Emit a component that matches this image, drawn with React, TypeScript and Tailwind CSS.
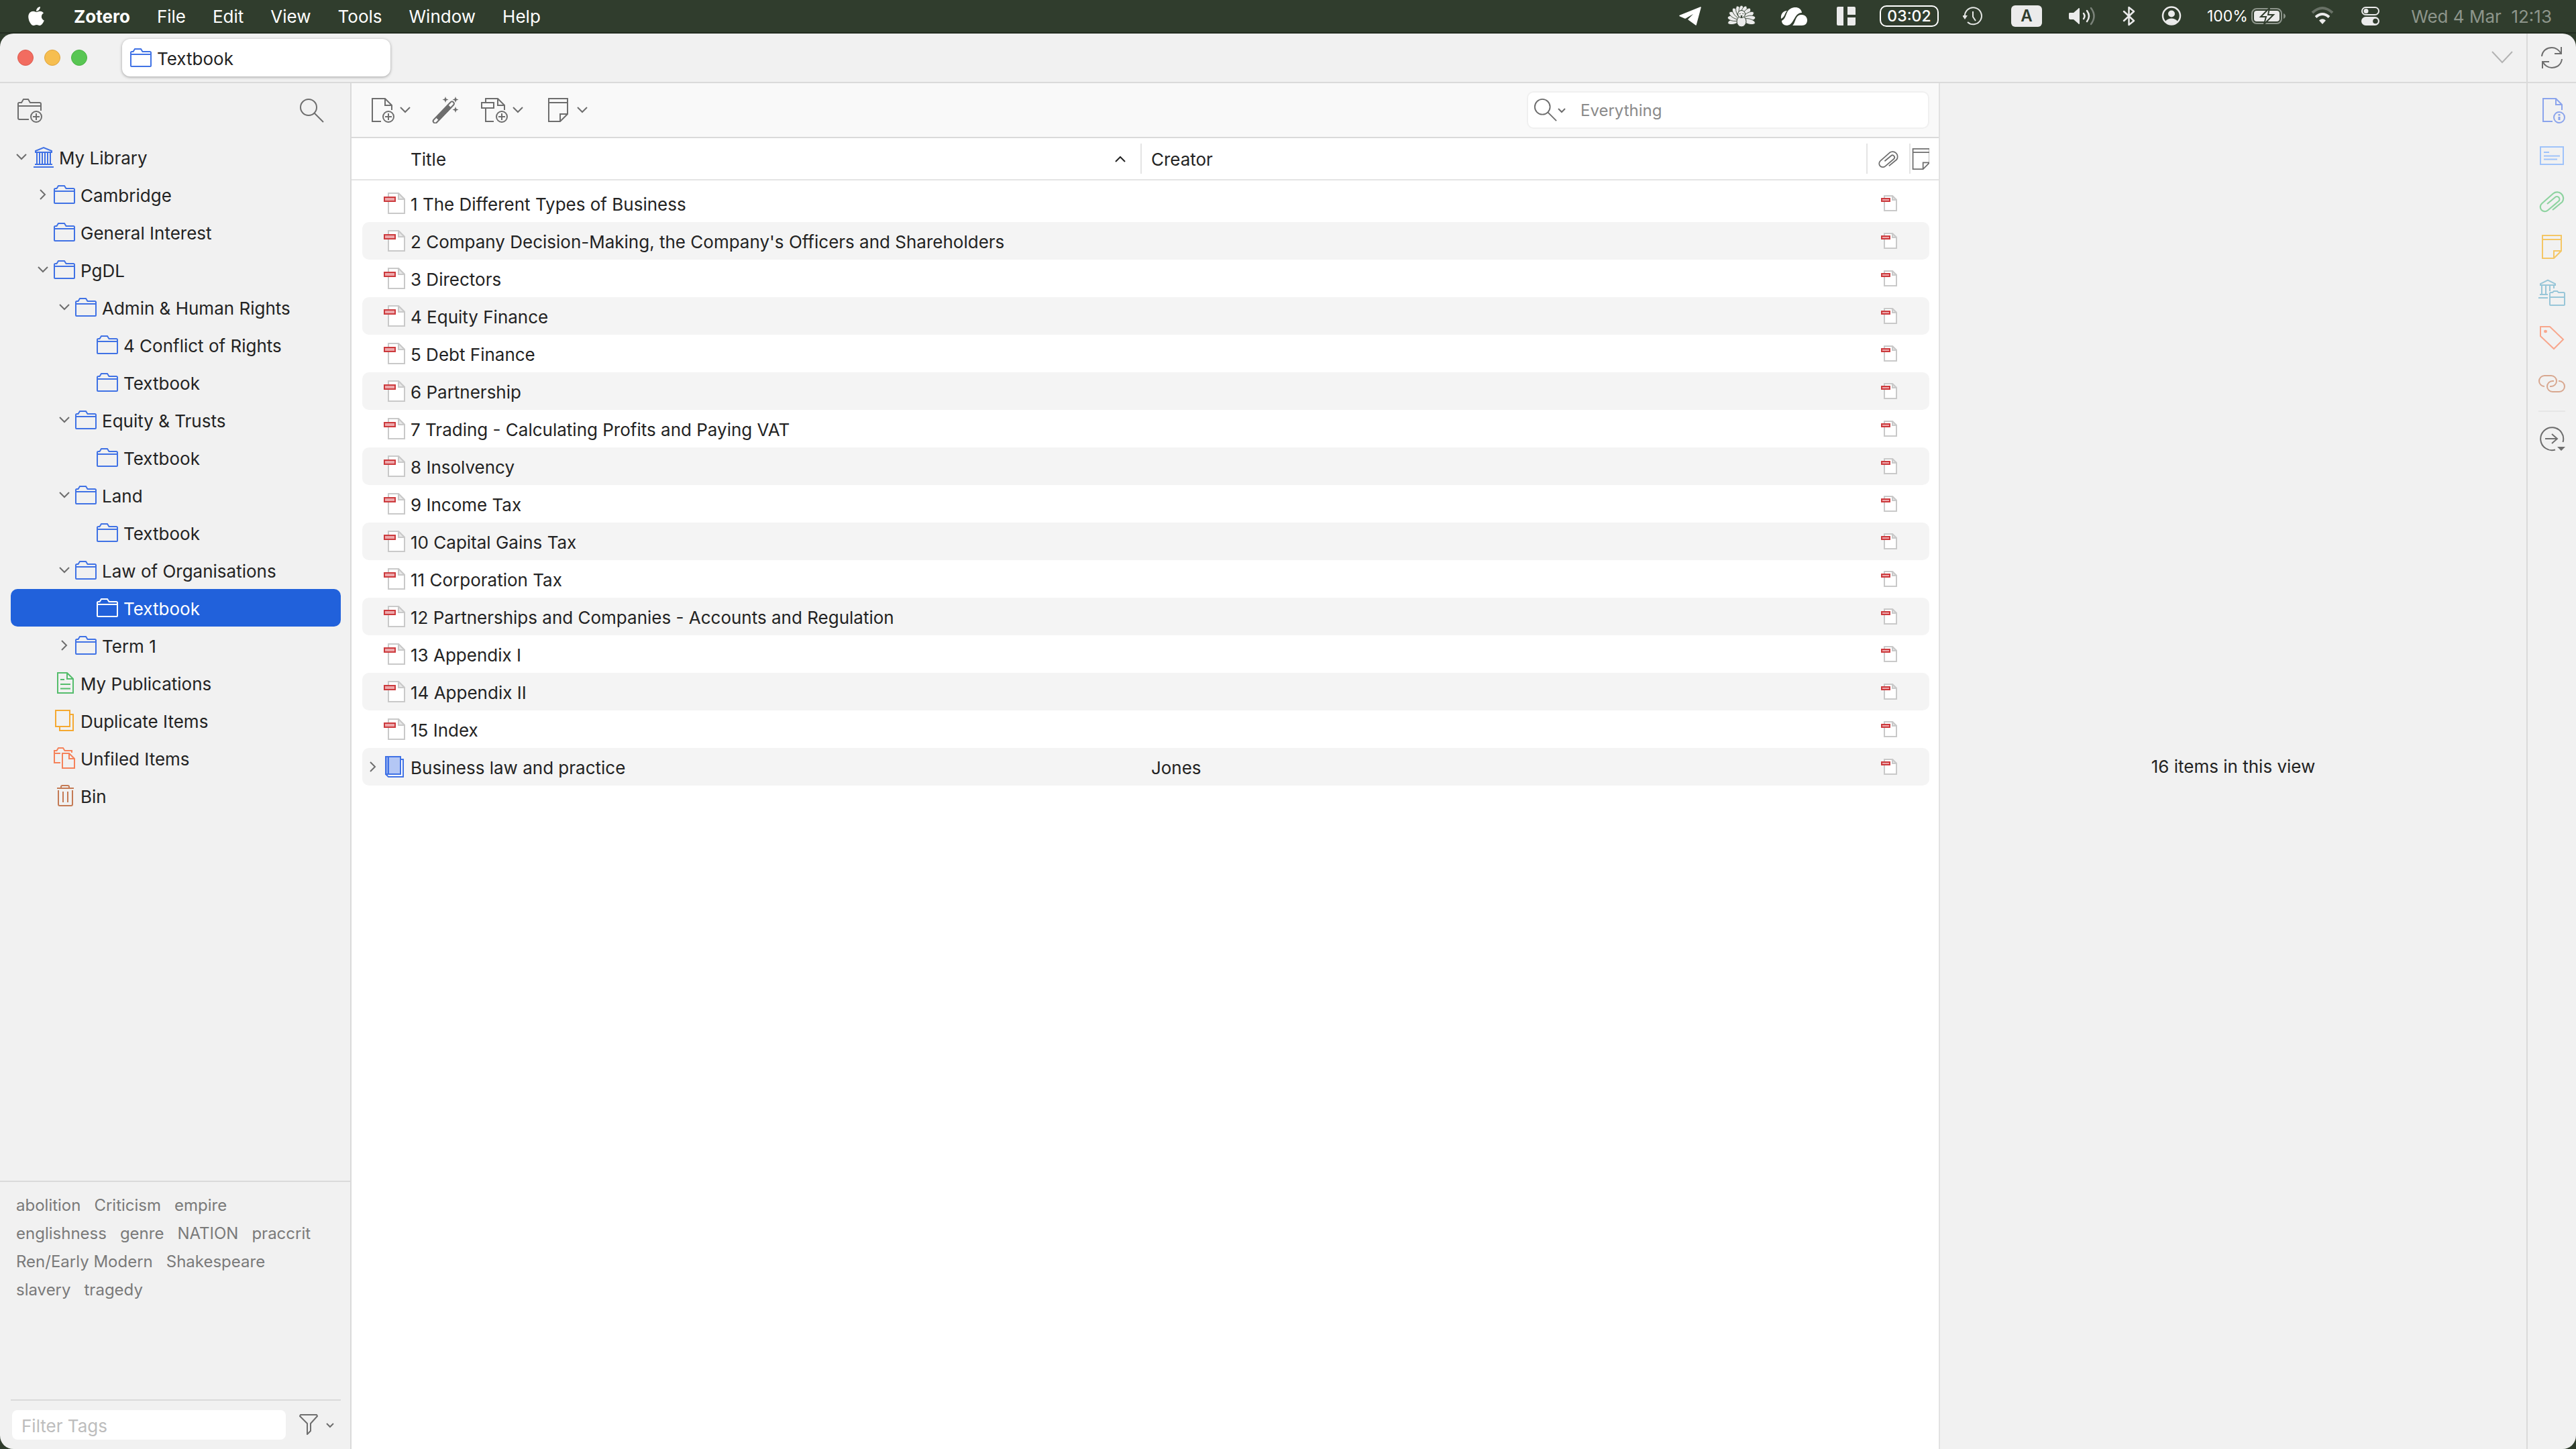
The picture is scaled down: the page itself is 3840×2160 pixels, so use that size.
import type { ReactNode } from 'react'
import { FaApple } from 'react-icons/fa'
import { clsx } from 'clsx'

type IconProps = { className?: string }

function Svg({ w, h, className, children }: { w: number; h: number; className?: string; children: ReactNode }) {
  return (
    <svg
      width={w}
      height={h}
      viewBox={`0 0 ${w} ${h}`}
      fill="none"
      stroke="currentColor"
      strokeWidth={2}
      className={clsx('shrink-0', className)}
      aria-hidden="true"
    >
      {children}
    </svg>
  )
}

/* ---------- generic icons ---------- */

const ChevronDown = ({ className }: IconProps) => (
  <Svg w={16} h={16} className={className}><path d="M1 4l7 7 7-7" /></Svg>
)

const ChevronRight = ({ className }: IconProps) => (
  <Svg w={16} h={16} className={className}><path d="M4 1l7 7-7 7" /></Svg>
)

const SmallChevron = ({ className }: IconProps) => (
  <Svg w={12} h={12} className={className}><path d="M1 4l5 5 5-5" /></Svg>
)

const SearchIcon = ({ className }: IconProps) => (
  <Svg w={38} h={38} className={className}>
    <circle cx="14" cy="14" r="12" />
    <path d="M22.500 22.500L36 36" />
  </Svg>
)

const FolderIcon = ({ className }: IconProps) => (
  <Svg w={32} h={32} className={className}>
    <path d="M1 28V8.500A1.500 1.500 0 0 1 2.500 7H4.500L7 3H16L18.500 7H29.500A1.500 1.500 0 0 1 31 8.500V28a1 1 0 0 1-1 1H2a1 1 0 0 1-1-1zM1 11H31" />
  </Svg>
)

const LibraryIcon = () => (
  <Svg w={32} h={32} className="text-[#4072e5]">
    <path d="M5 9V7l12-5 12 5v2zM7 9v18M11 9v18M15 9v18M19 9v18M23 9v18M27 9v18M4 27h26M2 31h30" />
  </Svg>
)

const PublicationsIcon = () => (
  <Svg w={32} h={32} className="text-[#55bd6c]">
    <path d="M6 1H20L29 10V31H6zM20 1V10H29M10 11H16M10 18H25M10 24.500H25" />
  </Svg>
)

const DuplicateIcon = () => (
  <Svg w={32} h={32} className="text-[#f5a931]">
    <path d="M3 1H24V25H3zM24 7H29V31H9V25" />
  </Svg>
)

const UnfiledIcon = () => (
  <Svg w={32} h={32} className="text-[#f5825a]">
    <path d="M10 23H1V5H4.500L7 1H14L16.500 5H27V8M1 9H10M13 9H23L31 17V31H13zM23 9V17H31" />
  </Svg>
)

const BinIcon = () => (
  <Svg w={32} h={32} className="text-[#c47a54]">
    <path d="M5 5H30M11 5V3a2 2 0 0 1 2-2H21a2 2 0 0 1 2 2V5M7 8V29a2 2 0 0 0 2 2H26a2 2 0 0 0 2-2V8M14 10V26M21 10V26" />
  </Svg>
)

const PlusBadge = ({ x, y }: { x: number; y: number }) => (
  <g>
    <circle cx={x} cy={y} r="8" />
    <path d={`M${x - 5} ${y}h10M${x} ${y - 5}v10`} />
  </g>
)

const NewCollectionIcon = () => (
  <Svg w={40} h={40}>
    <path d="M19 33H5a2 2 0 0 1-2-2V9.500A1.500 1.500 0 0 1 4.500 8H8L11 3H18L21 8H35a2 2 0 0 1 2 2V20M3 13H37" />
    <PlusBadge x={30} y={29} />
  </Svg>
)

const NewItemIcon = () => (
  <Svg w={40} h={40}>
    <path d="M16 37H3V3H22L32 13V20M22 3V13H32" />
    <PlusBadge x={27} y={30} />
  </Svg>
)

const WandIcon = () => (
  <Svg w={40} h={40}>
    <path d="M2.500 34.500L27.500 8.500a3 3 0 0 1 4.500 4L7 38.500a3 3 0 0 1-4.500-4z" />
    <path d="M7 31L24 13.500L27.500 17L10.500 34.500z" fill="currentColor" />
    <path d="M20 0l1.200 3.300L24.500 4.500l-3.300 1.200L20 9l-1.200-3.300L15.500 4.500l3.300-1.200zM35 0l1.200 3.300L39.500 4.500l-3.300 1.200L35 9l-1.200-3.300L30.500 4.500l3.300-1.200zM35 15l1.200 3.300 3.300 1.200-3.300 1.200L35 24l-1.200-3.300-3.300-1.200 3.300-1.200z" fill="currentColor" stroke="none" />
  </Svg>
)

const NewAttachmentIcon = () => (
  <Svg w={42} h={40}>
    <path d="M8 9V3H26L36 13V20M26 3V13H36M8 17V37H20" />
    <path d="M2 9H20V17H2z" />
    <PlusBadge x={32} y={30} />
  </Svg>
)

const NoteIcon = ({ className }: IconProps) => (
  <Svg w={32} h={36} className={className}>
    <path d="M2 1H30V24L19 35H2zM2 7H30M19 35V24H30" />
  </Svg>
)

const ClipIcon = ({ className }: IconProps) => (
  <Svg w={40} h={40} className={className}>
    <path
      d="M13 24L25 14a3.800 3.800 0 0 1 5 6L14 33.500a6.500 6.500 0 0 1-9-10L22 8.500a9.300 9.300 0 0 1 13.500 12.500L21 33"
      strokeWidth="2.200"
    />
  </Svg>
)

const PdfIcon = () => (
  <Svg w={32} h={32}>
    <path d="M7 1H22L31 10V31H7z" fill="#fff" stroke="#c9c9c9" />
    <path d="M22 1V10H31z" fill="#e8e8e8" stroke="#c9c9c9" />
    <path d="M1 7H17V13H1z" fill="#eda8ab" stroke="#cc3a3d" />
  </Svg>
)

const PdfSmallIcon = () => (
  <Svg w={24} h={24}>
    <path d="M5 1H17L23 7V23H5z" fill="#fff" stroke="#c9c9c9" />
    <path d="M17 1V7H23z" fill="#e8e8e8" stroke="#c9c9c9" />
    <path d="M1 5H13V9H1z" fill="#eda8ab" stroke="#cc3a3d" />
  </Svg>
)

const BookIcon = () => (
  <Svg w={32} h={32} className="text-[#4072e5]">
    <path d="M3 27l4 4H29V5H26" fill="#fff" />
    <path d="M3 1H25V27H3z" fill="#b4c7f5" />
    <path d="M3 1H7V27H3z" fill="#8aa8f0" />
  </Svg>
)

const FilterIcon = () => (
  <Svg w={28} h={32}>
    <path d="M2 1H26L27 3L17 14V25L12 30V14L1 3z" strokeLinejoin="round" />
  </Svg>
)

const SyncIcon = () => (
  <Svg w={32} h={34}>
    <path d="M1 15C2 6 9 2 16 2C22 2 27 6 29 10M30 1V11H20M31 19C30 28 23 32 16 32C10 32 5 28 3 24M2 33V23H12" />
  </Svg>
)

/* ---------- item pane side nav ---------- */

const InfoIcon = () => (
  <Svg w={40} h={40} className="text-[#8ba4ec]">
    <path d="M21 37H7V3H26L35 12V20M26 3V12H35" />
    <circle cx="31" cy="31" r="8" />
    <path d="M31 30V35M31 26V28.500" strokeWidth="3" />
  </Svg>
)

const AbstractIcon = () => (
  <Svg w={40} h={40} className="text-[#9fc3fa]">
    <path d="M3 7H37V33H3zM8 15H16M8 20.500H32M8 25.500H28" />
  </Svg>
)

const LibrariesIcon = () => (
  <Svg w={40} h={40} className="text-[#98c6d8]">
    <path d="M3 9V7L14 1.500L25 7V9zM5 9V22M11 9V22M17 9V18M23 9V14M2 23H14M0 28H14" />
    <path d="M17 38V21.500A1.500 1.500 0 0 1 18.500 20H21L23 18H28L30 20H37.500A1.500 1.500 0 0 1 39 21.500V38a1 1 0 0 1-1 1H18a1 1 0 0 1-1-1zM17 27H39" />
  </Svg>
)

const TagIcon = () => (
  <Svg w={40} h={40} className="text-[#f8a68c]">
    <path d="M3 3H17L37 22L23 36L3 17z" />
    <ellipse cx="10.500" cy="10" rx="2.500" ry="2.200" fill="currentColor" stroke="none" />
  </Svg>
)

const RelatedIcon = () => (
  <Svg w={40} h={40} className="text-[#d8a78f]">
    <path d="M9 24A8 8 0 0 1 9 8H19A8 8 0 0 1 19 24H17" />
    <path d="M30 16H31A8 8 0 0 1 31 32H21A8 8 0 0 1 21 16H23" />
  </Svg>
)

const LocateIcon = () => (
  <Svg w={40} h={40} className="text-[#6e6e6e]">
    <path d="M25 36.500A17 17 0 1 1 36.500 25M10 20H28M20 13L28 20L20 27" />
    <path d="M28 32H40L34 38z" fill="currentColor" stroke="none" />
  </Svg>
)

/* ---------- menu bar ---------- */

const TelegramIcon = () => (
  <Svg w={36} h={32}>
    <path d="M33 3L2 15.500L10 19L27 9L15 21L26 29z" fill="#fff" stroke="#fff" strokeLinejoin="round" strokeWidth="1.500" />
  </Svg>
)

const feathers = [-105, -82, -60, -38, -18, 0, 18, 38, 60, 82, 105]

const PeacockIcon = () => (
  <Svg w={44} h={32}>
    {feathers.map((angle) => (
      <ellipse key={angle} cx="22" cy="9" rx="4" ry="9" fill="#ebebeb" stroke="#303d2d" strokeWidth="0.800" transform={`rotate(${angle} 22 21)`} />
    ))}
    <ellipse cx="22" cy="24" rx="7" ry="8" fill="#ebebeb" stroke="#303d2d" strokeWidth="1" />
    <circle cx="22" cy="13" r="5.500" fill="#ebebeb" stroke="#303d2d" strokeWidth="1" />
    <path d="M19 12.500h1.500M23.500 12.500h1.500M21 15.500h2l-1 3z" stroke="#303d2d" fill="#303d2d" strokeWidth="1" />
  </Svg>
)

const CloudIcon = () => (
  <Svg w={44} h={32}>
    <path d="M1 20C0 12 5 8 10 8C6 12 7 17 1 20z" fill="#fff" stroke="none" />
    <path d="M2 23C10 19 7 9 15 5C22 1 31 3 32 11C20 11 21 29 10 30C5 30 2 27 2 23z" fill="#fff" stroke="none" />
    <path d="M18 30C23 26 22 13 32 14C37 14 40 18 40 22C40 27 37 30 32 30z" fill="#fff" stroke="none" />
  </Svg>
)

const PanelsIcon = () => (
  <Svg w={32} h={32}>
    <path d="M6 2H14V30H6a2 2 0 0 1-2-2V4a2 2 0 0 1 2-2zM20 2H30a2 2 0 0 1 2 2V14H20zM20 18H32V28a2 2 0 0 1-2 2H20z" fill="#ebebeb" stroke="none" />
  </Svg>
)

const HistoryIcon = () => (
  <Svg w={36} h={32} className="text-[#e4e6e4]">
    <path d="M3 17A12.500 12.500 0 1 1 7 25M15 9V17L19 23" />
    <path d="M-1 15H7L3 21z" fill="currentColor" stroke="none" />
  </Svg>
)

const VolumeIcon = () => (
  <Svg w={48} h={32} className="text-[#ebebeb]">
    <path d="M5 11H11L18 5a1 1 0 0 1 2 0V27a1 1 0 0 1-2 0L11 21H6a2 2 0 0 1-2-2V12z" fill="currentColor" stroke="none" />
    <path d="M26 12Q29 16 26 20" strokeWidth="2.500" strokeLinecap="round" />
    <path d="M31 8Q37 16 31 24" strokeWidth="2.500" strokeLinecap="round" />
    <path d="M37 4Q46 16 37 28" strokeWidth="2.500" strokeLinecap="round" opacity="0.400" />
  </Svg>
)

const BluetoothIcon = () => (
  <Svg w={20} h={32} className="text-[#ebebeb]">
    <path d="M2 9L17 23L9.500 29V3L17 9L2 23" strokeWidth="2.500" strokeLinejoin="round" strokeLinecap="round" />
  </Svg>
)

const UserIcon = () => (
  <Svg w={34} h={32} className="text-[#ebebeb]">
    <circle cx="17" cy="15.500" r="13" strokeWidth="2.500" />
    <circle cx="17" cy="12.500" r="5" fill="currentColor" stroke="none" />
    <path d="M8 24C11 18 23 18 26 24C22 29 12 29 8 24z" fill="currentColor" stroke="none" />
  </Svg>
)

const BatteryIcon = () => (
  <Svg w={52} h={28}>
    <rect x="1" y="3" width="44" height="22" rx="7" stroke="#8d958b" />
    <path d="M48 10C52 12 52 16 48 18z" fill="#8d958b" stroke="none" />
    <rect x="4" y="6" width="38" height="16" rx="4" fill="#ebebeb" stroke="none" />
    <path d="M27 2L14 15H22L19 26L33 12H25z" fill="#ebebeb" stroke="#303d2d" />
  </Svg>
)

const WifiIcon = () => (
  <Svg w={36} h={32} className="text-[#ebebeb]">
    <path d="M3 11Q18-3 33 11" strokeWidth="4" opacity="0.300" />
    <path d="M8 17.500Q18 8.500 28 17.500" strokeWidth="4" />
    <path d="M13 22.500Q18 18 23 22.500L18 28z" fill="currentColor" stroke="none" />
  </Svg>
)

const ControlCentreIcon = () => (
  <Svg w={36} h={32} className="text-[#ebebeb]">
    <rect x="5" y="3" width="25" height="11" rx="5.500" />
    <circle cx="11" cy="8.500" r="3.500" fill="currentColor" stroke="none" />
    <rect x="4" y="17" width="27" height="13" rx="6.500" fill="currentColor" stroke="none" />
    <circle cx="25" cy="23.500" r="3.800" fill="#303d2d" stroke="none" />
  </Svg>
)

function MenuBar() {
  return (
    <header className="flex h-[50px] items-center border-b-2 border-[#222c20] pl-[38px] pr-9 text-[26px] text-white">
      <FaApple size={32} className="mr-10" aria-label="Apple" />
      <nav className="flex items-center gap-10">
        <button className="font-bold">Zotero</button>
        {['File', 'Edit', 'View', 'Tools', 'Window', 'Help'].map((label) => (
          <button key={label}>{label}</button>
        ))}
      </nav>
      <div className="ml-auto flex items-center gap-9">
        <TelegramIcon />
        <PeacockIcon />
        <CloudIcon />
        <PanelsIcon />
        <span className="flex h-8 w-[88px] items-center justify-center rounded-[10px] border-2 border-white text-[23px] font-medium">03:02</span>
        <HistoryIcon />
        <span className="flex h-8 w-[46px] items-center justify-center rounded-md bg-[#ebebeb] text-2xl font-semibold text-[#303d2d]">A</span>
        <VolumeIcon />
        <BluetoothIcon />
        <UserIcon />
        <div className="flex w-[118px] items-center justify-between text-[23px]">
          <span>100%</span>
          <BatteryIcon />
        </div>
        <WifiIcon />
        <ControlCentreIcon />
        <span className="w-[216px] whitespace-pre text-right text-[#8d958b]">{'Wed 4 Mar  12:13'}</span>
      </div>
    </header>
  )
}

function TitleBar() {
  return (
    <div className="flex h-[74px] items-stretch border-b-2 border-[#dadada]">
      <div className="flex items-center gap-4 pl-[26px]">
        <button aria-label="Close" className="size-6 rounded-full border border-[#dc5c50] bg-[#f26c60]" />
        <button aria-label="Minimise" className="size-6 rounded-full border border-[#dfa43c] bg-[#f6be50]" />
        <button aria-label="Zoom" className="size-6 rounded-full border border-[#4ab243] bg-[#58c653]" />
      </div>
      <button className="ml-[52px] flex h-14 w-[400px] items-center gap-2 self-center rounded-xl bg-white pl-3 shadow-[0_1px_4px_rgba(0,0,0,0.35)]">
        <FolderIcon className="text-[#4072e5]" />
        <span className="pt-0.5">Textbook</span>
      </button>
      <button aria-label="List all tabs" className="ml-auto mr-5 self-center text-[#b3b3b3]">
        <Svg w={32} h={20}><path d="M1 1L16 17L31 1" /></Svg>
      </button>
      <button aria-label="Sync" className="flex w-[74px] items-center justify-center border-l-2 border-[#dadada] text-[#6e6e6e]">
        <SyncIcon />
      </button>
    </div>
  )
}

type Node = {
  label: string
  level: number
  open?: boolean
  selected?: boolean
  icon?: ReactNode
}

const tree: Node[] = [
  { label: 'My Library', level: 0, open: true, icon: <LibraryIcon /> },
  { label: 'Cambridge', level: 1, open: false },
  { label: 'General Interest', level: 1 },
  { label: 'PgDL', level: 1, open: true },
  { label: 'Admin & Human Rights', level: 2, open: true },
  { label: '4 Conflict of Rights', level: 3 },
  { label: 'Textbook', level: 3 },
  { label: 'Equity & Trusts', level: 2, open: true },
  { label: 'Textbook', level: 3 },
  { label: 'Land', level: 2, open: true },
  { label: 'Textbook', level: 3 },
  { label: 'Law of Organisations', level: 2, open: true },
  { label: 'Textbook', level: 3, selected: true },
  { label: 'Term 1', level: 2, open: false },
  { label: 'My Publications', level: 1, icon: <PublicationsIcon /> },
  { label: 'Duplicate Items', level: 1, icon: <DuplicateIcon /> },
  { label: 'Unfiled Items', level: 1, icon: <UnfiledIcon /> },
  { label: 'Bin', level: 1, icon: <BinIcon /> },
]

const indent = ['pl-0', 'pl-8', 'pl-16', 'pl-24']

function CollectionTree() {
  return (
    <ul role="tree" className="pl-4 pr-3.5">
      {tree.map((node, i) => (
        <li
          key={i}
          role="treeitem"
          aria-selected={!!node.selected}
          aria-expanded={node.open}
          className={clsx(
            'flex h-14 items-center rounded-[10px]',
            indent[node.level],
            node.selected && 'bg-[#2161db] text-white'
          )}
        >
          {node.open === undefined ? (
            <span className="w-8" />
          ) : (
            <button aria-label={`Toggle ${node.label}`} className="flex w-8 justify-center text-[#6e6e6e]">
              {node.open ? <ChevronDown /> : <ChevronRight />}
            </button>
          )}
          <button className="flex items-center gap-2 whitespace-nowrap">
            {node.icon ?? <FolderIcon className={node.selected ? 'text-white' : 'text-[#4072e5]'} />}
            <span className="pt-0.5">{node.label}</span>
          </button>
        </li>
      ))}
    </ul>
  )
}

const tags = [
  'abolition', 'Criticism', 'empire', 'englishness', 'genre', 'NATION',
  'praccrit', 'Ren/Early Modern', 'Shakespeare', 'slavery', 'tragedy',
]

function TagSelector() {
  return (
    <section className="flex h-[400px] flex-col border-t-2 border-[#dadada]">
      <div className="flex flex-1 flex-wrap content-start gap-x-5 pl-6 pr-12 pt-3.5 text-[24px] leading-[42px] text-[#7a7a7a]">
        {tags.map((tag) => (
          <button key={tag}>{tag}</button>
        ))}
      </div>
      <div className="ml-4 mr-3.5 flex h-[74px] items-start border-t-2 border-[#dadada] pt-3.5">
        <input
          aria-label="Filter Tags"
          placeholder="Filter Tags"
          className="ml-0.5 h-11 w-[408px] rounded-lg bg-white px-3.5 pt-0.5 placeholder:text-[#bdbdbd]"
        />
        <button aria-label="Tag options" className="ml-5 flex h-11 items-center gap-3 text-[#6e6e6e]">
          <FilterIcon />
          <SmallChevron />
        </button>
      </div>
    </section>
  )
}

function Sidebar() {
  return (
    <aside className="flex w-[524px] shrink-0 flex-col border-r-2 border-[#dadada]">
      <div className="flex h-[82px] items-center justify-between pl-6 pr-[38px] text-[#6e6e6e]">
        <button aria-label="New Collection"><NewCollectionIcon /></button>
        <button aria-label="Filter Collections"><SearchIcon /></button>
      </div>
      <div className="flex-1">
        <CollectionTree />
      </div>
      <TagSelector />
    </aside>
  )
}

function Toolbar() {
  return (
    <div className="flex h-[82px] items-center border-b-2 border-[#dadada] bg-[#f9f9f9] pl-7 pr-3.5 text-[#6e6e6e]">
      <button aria-label="New Item" className="flex items-center gap-1">
        <NewItemIcon />
        <ChevronDown />
      </button>
      <button aria-label="Add Item by Identifier" className="ml-8"><WandIcon /></button>
      <button aria-label="Add Attachment" className="ml-8 flex items-center gap-1.5">
        <NewAttachmentIcon />
        <ChevronDown />
      </button>
      <button aria-label="New Note" className="ml-9 flex items-center gap-3">
        <NoteIcon />
        <ChevronDown />
      </button>
      <div className="ml-auto flex h-14 w-[600px] items-center rounded-[10px] border-2 border-[#f0f0f0] bg-white pl-2">
        <button aria-label="Search mode" className="flex items-center">
          <SearchIcon className="size-9" />
          <SmallChevron />
        </button>
        <input
          type="search"
          aria-label="Search"
          placeholder="Everything"
          className="ml-[22px] min-w-0 flex-1 pt-0.5 text-[24px] outline-none placeholder:text-[#8a8a8a]"
        />
      </div>
    </div>
  )
}

type Item = { title: string; creator?: string; book?: boolean }

const items: Item[] = [
  { title: '1 The Different Types of Business' },
  { title: "2 Company Decision-Making, the Company's Officers and Shareholders" },
  { title: '3 Directors' },
  { title: '4 Equity Finance' },
  { title: '5 Debt Finance' },
  { title: '6 Partnership' },
  { title: '7 Trading - Calculating Profits and Paying VAT' },
  { title: '8 Insolvency' },
  { title: '9 Income Tax' },
  { title: '10 Capital Gains Tax' },
  { title: '11 Corporation Tax' },
  { title: '12 Partnerships and Companies - Accounts and Regulation' },
  { title: '13 Appendix I' },
  { title: '14 Appendix II' },
  { title: '15 Index' },
  { title: 'Business law and practice', creator: 'Jones', book: true },
]

function ItemsTable() {
  return (
    <table className="w-full table-fixed border-separate border-spacing-0">
      <thead className="text-left">
        <tr className="h-[63px]">
          <th className="w-[49.7%] border-b-2 border-[#e4e4e4] p-0 font-normal" aria-sort="ascending">
            <button className="flex w-full items-center justify-between pl-[88px] pr-[22px]">
              <span className="pt-0.5">Title</span>
              <ChevronDown className="rotate-180" />
            </button>
          </th>
          <th className="border-b-2 border-[#e4e4e4] p-0 font-normal">
            <button className="flex h-[45px] w-full items-center border-l-2 border-[#e4e4e4] pl-3.5">
              <span className="pt-0.5">Creator</span>
            </button>
          </th>
          <th className="w-16 border-b-2 border-[#e4e4e4] p-0 font-normal">
            <button aria-label="Attachments" className="flex h-[45px] w-full items-center justify-center border-l-2 border-[#e4e4e4] text-[#6e6e6e]">
              <ClipIcon className="size-8" />
            </button>
          </th>
          <th className="w-11 border-b-2 border-[#e4e4e4] p-0 pr-3.5 font-normal">
            <button aria-label="Notes" className="flex h-[45px] w-full items-center overflow-hidden border-l-2 border-[#e4e4e4] text-[#6e6e6e]">
              <NoteIcon className="h-8" />
            </button>
          </th>
        </tr>
      </thead>
      <tbody className="before:block before:h-1.5 before:content-['']">
        {items.map((item, i) => {
          const stripe = i % 2 === 1 && 'bg-[#f4f4f4]'
          return (
            <tr key={item.title}>
              <td className="p-0 pl-4">
                <div className={clsx('flex h-14 items-center rounded-l-[10px] whitespace-nowrap', stripe)}>
                  <span className="flex w-8 justify-center text-[#6e6e6e]">
                    {item.book && (
                      <button aria-label={`Toggle ${item.title}`}><ChevronRight /></button>
                    )}
                  </span>
                  {item.book ? <BookIcon /> : <PdfIcon />}
                  <span className="pl-2 pt-0.5">{item.title}</span>
                </div>
              </td>
              <td className="p-0">
                <div className={clsx('flex h-14 items-center pl-4 pt-0.5', stripe)}>{item.creator}</div>
              </td>
              <td className="p-0">
                <div className={clsx('flex h-14 items-center justify-center pl-1', stripe)}><PdfSmallIcon /></div>
              </td>
              <td className="p-0 pr-3.5">
                <div className={clsx('h-14 rounded-r-[10px]', stripe)} />
              </td>
            </tr>
          )
        })}
      </tbody>
    </table>
  )
}

const sections = [
  { label: 'Info', icon: <InfoIcon /> },
  { label: 'Abstract', icon: <AbstractIcon /> },
  { label: 'Attachments', icon: <ClipIcon className="text-[#8ed3a0]" /> },
  { label: 'Notes', icon: <NoteIcon className="text-[#f4c665]" /> },
  { label: 'Libraries and Collections', icon: <LibrariesIcon /> },
  { label: 'Tags', icon: <TagIcon /> },
  { label: 'Related', icon: <RelatedIcon /> },
]

function SideNav() {
  return (
    <nav className="flex w-[74px] shrink-0 flex-col items-center border-l-2 border-[#dadada] pt-1.5">
      {sections.map((section) => (
        <button key={section.label} aria-label={section.label} className="flex h-[68px] w-10 items-center justify-center">
          {section.icon}
        </button>
      ))}
      <hr className="my-1.5 w-10 border-t-2 border-[#e6e6e6]" />
      <button aria-label="Locate" className="flex h-[68px] items-center"><LocateIcon /></button>
    </nav>
  )
}

export default function App() {
  return (
    <div className="flex min-h-screen flex-col bg-[#303d2d] font-['Inter','Liberation_Sans',sans-serif] text-[26px] text-[#232323]">
      <MenuBar />
      <div className="flex flex-1 flex-col overflow-hidden rounded-[20px] bg-[#f1f1f1]">
        <TitleBar />
        <div className="flex flex-1">
          <Sidebar />
          <main className="min-w-0 flex-1 border-r-2 border-[#e2e2e2] bg-white">
            <Toolbar />
            <ItemsTable />
          </main>
          <section className="flex w-[874px] shrink-0 items-center justify-center">16 items in this view</section>
          <SideNav />
        </div>
      </div>
    </div>
  )
}
